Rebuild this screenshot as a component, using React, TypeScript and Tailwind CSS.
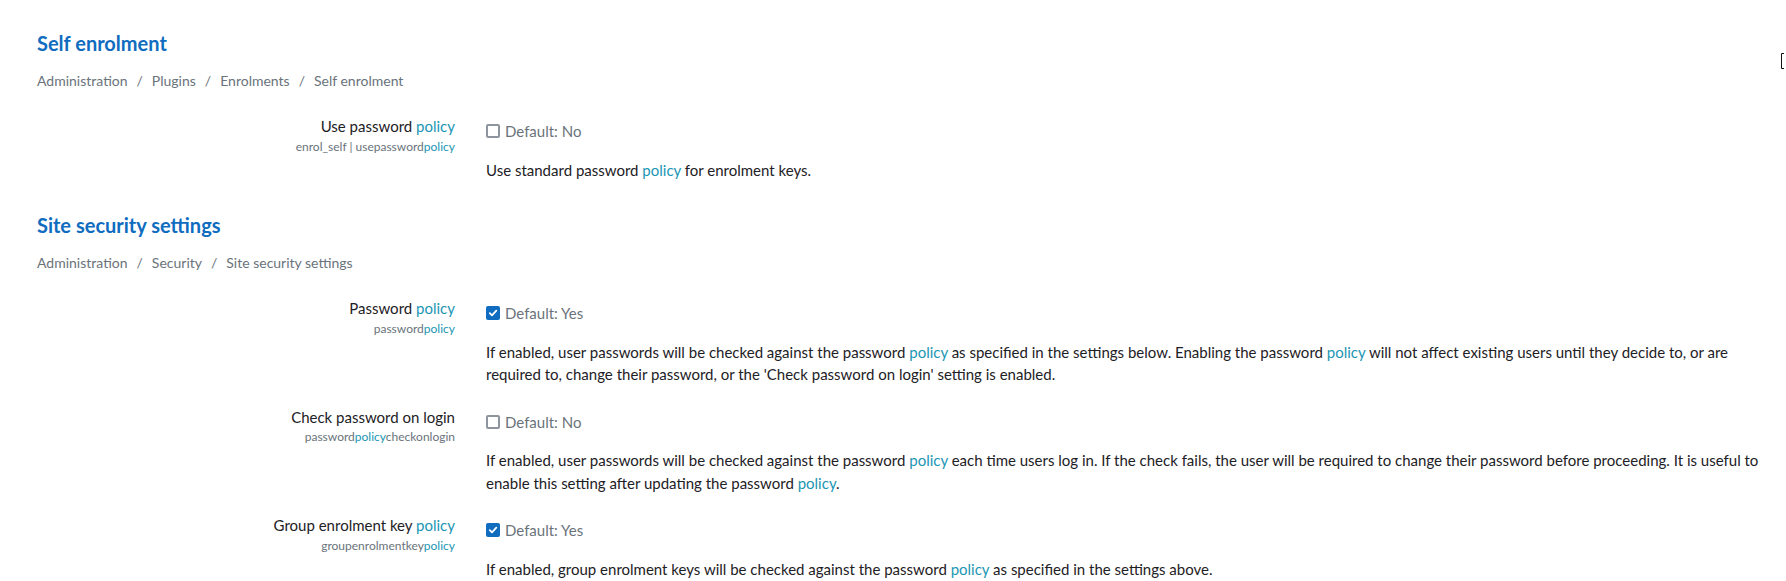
import React from "react";

const font = { fontFamily: "Lato, 'Liberation Sans', sans-serif" };

function Hl({ children }: { children: React.ReactNode }) {
  return <span className="text-[#1b96b4]">{children}</span>;
}

function Checkbox({ checked }: { checked: boolean }) {
  if (checked) {
    return (
      <span className="inline-flex h-[14px] w-[14px] items-center justify-center rounded-[2px] bg-[#0f6cbf]">
        <svg width="10" height="10" viewBox="0 0 10 10" fill="none">
          <path
            d="M1.8 5.2 L4 7.3 L8.3 2.6"
            stroke="white"
            strokeWidth="1.8"
            strokeLinecap="round"
            strokeLinejoin="round"
          />
        </svg>
      </span>
    );
  }
  return (
    <span className="inline-block h-[14px] w-[14px] rounded-[2px] border-2 border-[#8f959e] bg-white" />
  );
}

type Setting = {
  label: React.ReactNode;
  name: React.ReactNode;
  checked: boolean;
  desc: React.ReactNode;
};

function SettingRow({ s }: { s: Setting }) {
  return (
    <div className="mb-[20px] flex">
      <div className="w-[418px] shrink-0 text-right">
        <div className="text-[15px] leading-[22.5px] text-[#1d2125]">{s.label}</div>
        <div className="text-[12px] leading-[17px] text-[#6a737b]">{s.name}</div>
      </div>
      <div className="ml-[31px] flex-1 pt-[5px] pr-[8px]">
        <div className="flex items-center gap-[5px] text-[15px] leading-[22.5px] text-[#6a737b]">
          <Checkbox checked={s.checked} />
          <span>{s.checked ? "Default: Yes" : "Default: No"}</span>
        </div>
        <div className="mt-[16px] text-[15px] leading-[22.5px] text-[#1d2125]">{s.desc}</div>
      </div>
    </div>
  );
}

function Breadcrumb({ items }: { items: string[] }) {
  return (
    <nav className="mt-[15px] flex items-center text-[14px] leading-[21px] text-[#6a737b]">
      {items.map((item, i) => (
        <React.Fragment key={item}>
          {i > 0 && <span className="px-[9px]">/</span>}
          <span>{item}</span>
        </React.Fragment>
      ))}
    </nav>
  );
}

function Section({
  title,
  crumbs,
  settings,
  className,
}: {
  title: string;
  crumbs: string[];
  settings: Setting[];
  className?: string;
}) {
  return (
    <section className={className}>
      <h2 className="text-[20px] leading-[24px] font-bold text-[#0f6cbf]">{title}</h2>
      <Breadcrumb items={crumbs} />
      <div className="mt-[24px]">
        {settings.map((s, i) => (
          <SettingRow key={i} s={s} />
        ))}
      </div>
    </section>
  );
}

const selfSettings: Setting[] = [
  {
    label: (
      <>
        Use password <Hl>policy</Hl>
      </>
    ),
    name: (
      <>
        enrol_self | usepassword<Hl>policy</Hl>
      </>
    ),
    checked: false,
    desc: (
      <>
        Use standard password <Hl>policy</Hl> for enrolment keys.
      </>
    ),
  },
];

const securitySettings: Setting[] = [
  {
    label: (
      <>
        Password <Hl>policy</Hl>
      </>
    ),
    name: (
      <>
        password<Hl>policy</Hl>
      </>
    ),
    checked: true,
    desc: (
      <>
        If enabled, user passwords will be checked against the password <Hl>policy</Hl> as
        specified in the settings below. Enabling the password <Hl>policy</Hl> will not affect
        existing users until they decide to, or are required to, change their password, or the
        'Check password on login' setting is enabled.
      </>
    ),
  },
  {
    label: "Check password on login",
    name: (
      <>
        password<Hl>policy</Hl>checkonlogin
      </>
    ),
    checked: false,
    desc: (
      <>
        If enabled, user passwords will be checked against the password <Hl>policy</Hl> each
        time users log in. If the check fails, the user will be required to change their password
        before proceeding. It is useful to enable this setting after updating the password{" "}
        <Hl>policy</Hl>.
      </>
    ),
  },
  {
    label: (
      <>
        Group enrolment key <Hl>policy</Hl>
      </>
    ),
    name: (
      <>
        groupenrolmentkey<Hl>policy</Hl>
      </>
    ),
    checked: true,
    desc: (
      <>
        If enabled, group enrolment keys will be checked against the password <Hl>policy</Hl> as
        specified in the settings above.
      </>
    ),
  },
];

export default function App() {
  return (
    <div className="relative min-h-[581px] bg-white pl-[37px] pt-[31px]" style={font}>
      <Section
        title="Self enrolment"
        crumbs={["Administration", "Plugins", "Enrolments", "Self enrolment"]}
        settings={selfSettings}
      />
      <Section
        className="mt-[32px]"
        title="Site security settings"
        crumbs={["Administration", "Security", "Site security settings"]}
        settings={securitySettings}
      />
      {/* mouse cursor at the right edge */}
      <svg className="absolute right-0 top-[53px]" width="5" height="16" viewBox="0 0 5 16">
        <path d="M0.5 0.5 H3 M0.5 0.5 V15.5 M0.5 15.5 H3" stroke="#111" strokeWidth="1" fill="none" />
      </svg>
    </div>
  );
}
